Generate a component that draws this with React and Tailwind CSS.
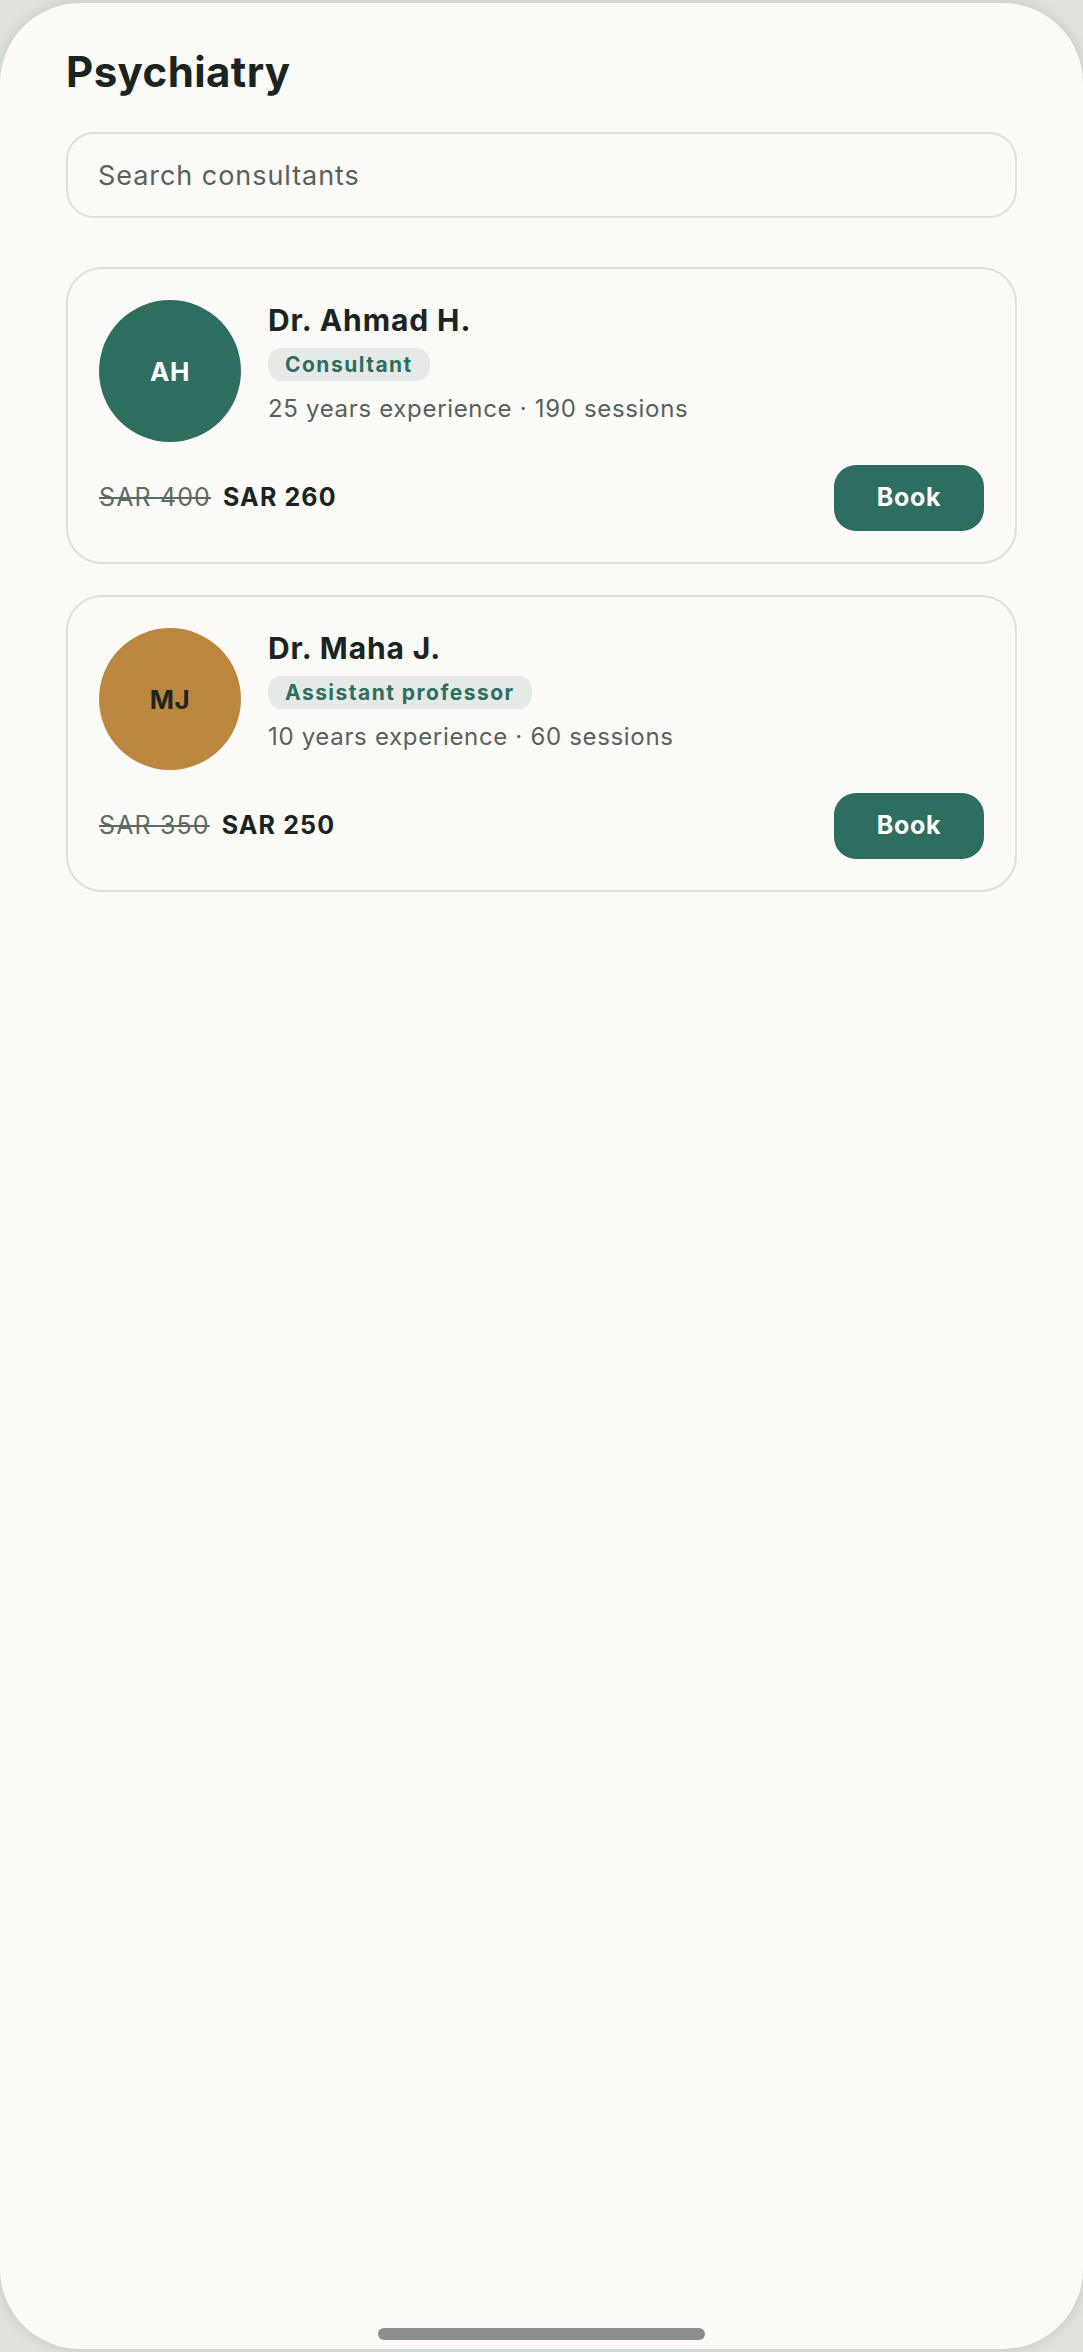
import React from 'react';

const consultants = [
  {
    initials: 'AH',
    name: 'Dr. Ahmad H.',
    title: 'Consultant',
    years: 25,
    sessions: 190,
    oldPrice: 400,
    price: 260,
    avatar: 'bg-[#2e6e60] text-white',
  },
  {
    initials: 'MJ',
    name: 'Dr. Maha J.',
    title: 'Assistant professor',
    years: 10,
    sessions: 60,
    oldPrice: 350,
    price: 250,
    avatar: 'bg-[#bb873f] text-[#1c2621]',
  },
];

const ConsultantCard = ({ c }) => (
  <div className="rounded-[36px] border-2 border-[#dfded8] px-[31px] pt-[31px] pb-[31px]">
    <div className="flex items-start gap-[27px]">
      <div
        className={`w-[142px] h-[142px] shrink-0 rounded-full flex items-center justify-center text-[26px] font-bold tracking-[0.02em] ${c.avatar}`}
      >
        {c.initials}
      </div>
      <div className="flex flex-col items-start pt-[2px]">
        <div className="text-[30px] leading-[36px] font-bold text-[#1a2420] tracking-[0.03em]">{c.name}</div>
        <span className="mt-[10px] h-[33px] px-[17px] rounded-[14px] bg-[#e5eae6] text-[#2e6e60] text-[21px] font-bold tracking-[0.07em] flex items-center">
          {c.title}
        </span>
        <div className="mt-[12px] text-[24px] leading-[32px] text-[#56625b] tracking-[0.028em]">
          {c.years} years experience · {c.sessions} sessions
        </div>
      </div>
    </div>
    <div className="mt-[23px] flex items-center justify-between">
      <div className="flex items-center gap-[12px] text-[25px] tracking-[0.045em]">
        <span className="line-through text-[#5c6b62]">SAR {c.oldPrice}</span>
        <span className="font-bold text-[#1a2420]">SAR {c.price}</span>
      </div>
      <button className="w-[150px] h-[66px] rounded-[22px] bg-[#2e6e60] text-white text-[25px] font-bold tracking-[0.03em]">
        Book
      </button>
    </div>
  </div>
);

export default function App() {
  return (
    <div
      className="w-[1083px] h-[2352px] bg-[#dfe1dc] pt-[3px]"
      style={{ fontFamily: "Inter, 'Noto Sans', sans-serif" }}
    >
      <div className="h-[2346px] rounded-[80px] bg-[#fbfaf6] shadow-[0_0_14px_rgba(0,0,0,0.12)] flex flex-col px-[66px] pt-[44px]">
        <h1 className="text-[42px] leading-[50px] font-bold text-[#1a2420] tracking-[0.01em]">Psychiatry</h1>
        <div className="mt-[35px] h-[86px] rounded-[28px] border-2 border-[#dfded8] flex items-center px-[30px] pt-[2px]">
          <span className="text-[27px] text-[#56625b] tracking-[0.035em]">Search consultants</span>
        </div>
        <div className="mt-[49px] flex flex-col gap-[31px]">
          {consultants.map((c) => (
            <ConsultantCard key={c.initials} c={c} />
          ))}
        </div>
        <div className="mt-auto mb-[9px] self-center w-[327px] h-[12px] rounded-full bg-[#8a8e8a]" />
      </div>
    </div>
  );
}
